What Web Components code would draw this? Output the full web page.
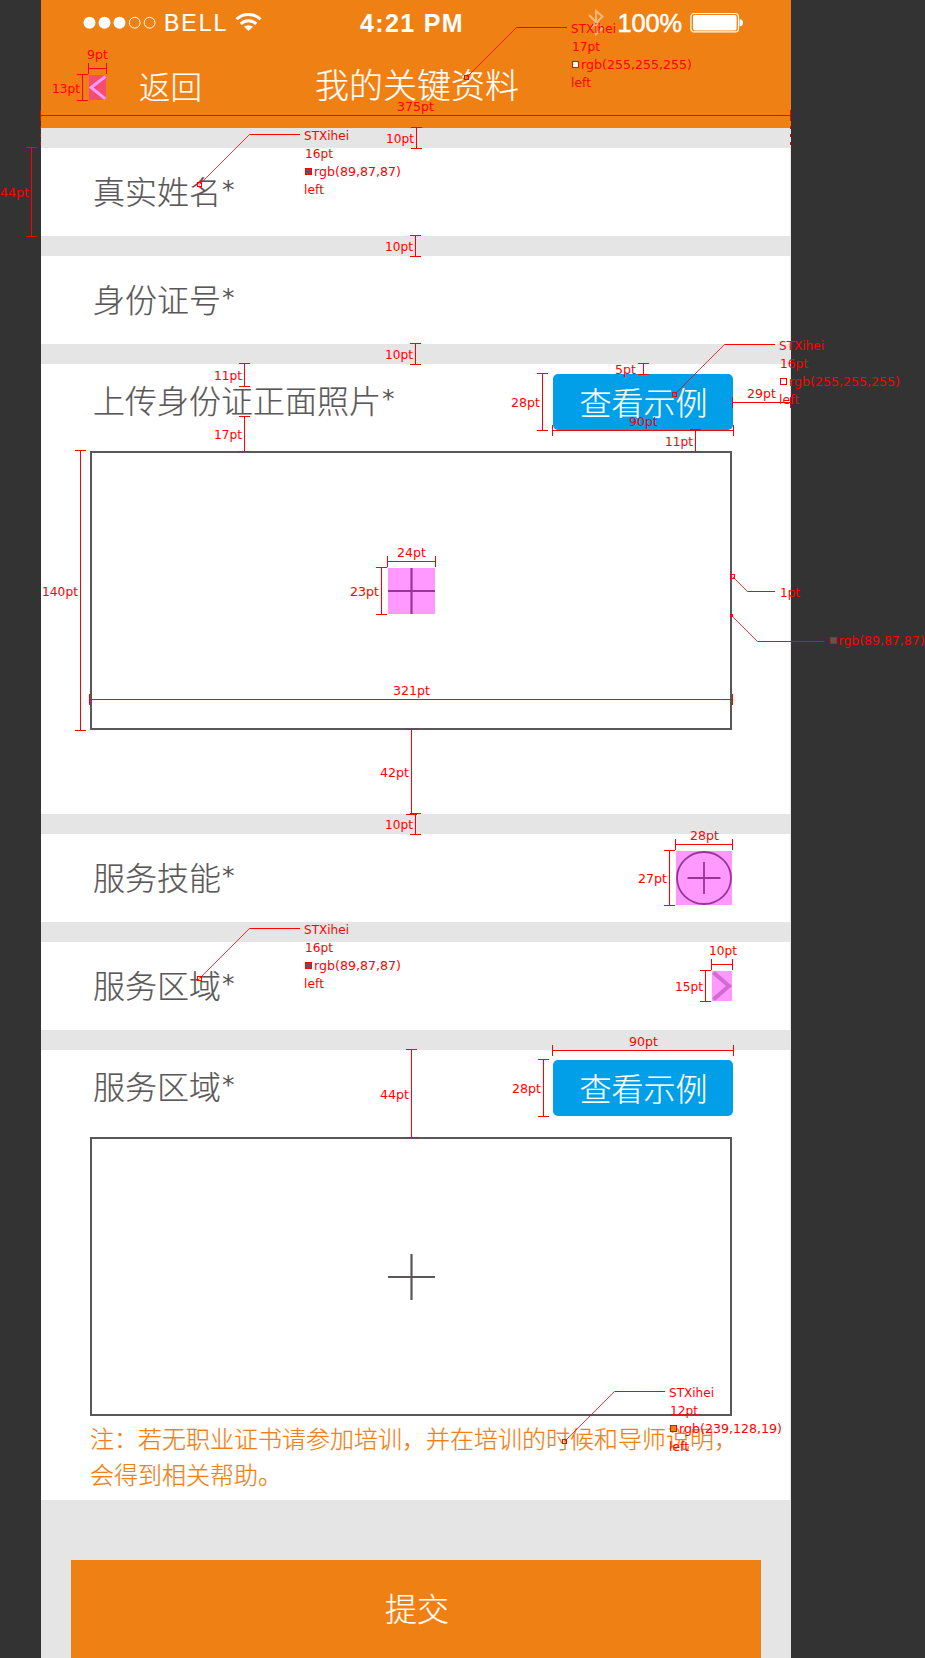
<!DOCTYPE html>
<html lang="zh-CN">
<head>
<meta charset="utf-8">
<title>我的关键资料</title>
<style>
html,body{margin:0;padding:0}
body{width:925px;height:1658px;overflow:hidden;background:#333;position:relative;
font-family:"Noto Sans CJK SC",sans-serif;font-weight:300}
</style>
</head>
<body>
<phone-screen>
  <app-header slot="header" heading="我的关键资料" back="返回"></app-header>
  <form-row label="真实姓名"></form-row>
  <form-row label="身份证号"></form-row>
  <upload-section label="上传身份证正面照片"></upload-section>
  <form-row label="服务技能">
    <svg width="56" height="54" viewBox="0 0 56 54" fill="none" stroke="#595757" stroke-width="1.8"><ellipse cx="28" cy="27" rx="27" ry="26"/><path d="M11.5 27H44.5M28 11V43"/></svg>
  </form-row>
  <form-row label="服务区域">
    <svg width="20" height="30" viewBox="0 0 20 30" fill="none" stroke="#b2b2b2" stroke-width="4"><path d="M1.5 1.5L17 15L1.5 28.5"/></svg>
  </form-row>
  <upload-section label="服务区域">注：若无职业证书请参加培训，并在培训的时候和导师说明，会得到相关帮助。</upload-section>
  <submit-button slot="footer">提交</submit-button>
</phone-screen>
<spec-overlay></spec-overlay>
<script>
const define = (name, html) => customElements.define(name, class extends HTMLElement {
  constructor() {
    super();
    this.attachShadow({mode: 'open'}).innerHTML =
      html.replace(/\{\{(\w+)\}\}/g, (_, k) => this.getAttribute(k) || '');
  }
});

define('phone-screen', `<style>
:host{display:flex;flex-direction:column;width:750px;height:1658px;margin-left:41px;background:#e5e5e5}
main{display:flex;flex-direction:column;gap:20px;padding:20px 1px 0 0}
</style><slot name="header"></slot><main><slot></slot></main><slot name="footer"></slot>`);

define('status-bar', `<style>
:host{display:grid;grid-template-columns:319px 227px 1fr;height:46px;color:#fff;font-family:"Liberation Sans",sans-serif;font-weight:400;line-height:46px}
div{display:flex;align-items:center;white-space:nowrap}
svg{flex:none}
.bell{font-size:23px;letter-spacing:2px;margin-left:8px;width:67px;-webkit-text-stroke:.2px #fff}
.time{font-size:25px;font-weight:700;letter-spacing:1.35px}
.pct{font-size:25.4px;-webkit-text-stroke:.5px #fff;margin-left:13.5px;width:72.5px;letter-spacing:-.1px}
</style>
<div>
<svg style="margin-left:42px" width="73" height="46" fill="#fff"><circle cx="6.5" cy="22.7" r="6"/><circle cx="21.5" cy="22.7" r="6"/><circle cx="36.5" cy="22.7" r="6"/><g fill="none" stroke="#fff"><circle cx="51.7" cy="22.7" r="5.4"/><circle cx="66.6" cy="22.7" r="5.4"/></g></svg>
<span class="bell">BELL</span>
<svg style="margin-left:3px" width="28" height="46" fill="none" stroke="#fff" stroke-width="3"><path d="M2.5 19.2C9 12.8 20 12.8 26.5 19.2M6.8 23.8C11 19.8 18 19.8 22.2 23.8"/><path d="M14.5 31L10 26.8Q14.5 23.8 19 26.8Z" fill="#fff" stroke="none"/></svg>
</div>
<div><span class="time">4:21 PM</span></div>
<div><svg width="17" height="46" fill="none" stroke="#fff" stroke-opacity=".45" stroke-width="2"><path d="M2 15L15.500 28.500L9 34V11L15.500 16.500L2 30"/></svg>
<span class="pct">100%</span>
<svg width="55" height="46" fill="none" stroke="#fff"><rect x=".9" y="13.500" width="47.600" height="18.400" rx="3.500" stroke-width="1.200"/><rect x="3" y="15" width="43.600" height="15.500" rx="2" fill="#fff" stroke="none"/><path d="M49.500 19.200Q53 19.400 53 22.700T49.500 26.200Z" fill="#fff" stroke="none"/></svg></div>`);

define('app-header', `<style>
:host{display:flex;flex-direction:column;height:128px;background:#ef8013;color:#fff}
nav{display:grid;grid-template-columns:274px 1fr;height:82px;-webkit-text-stroke:.2px}
.back{display:flex;align-items:flex-start;font-size:31.5px;line-height:48px;padding:15px 0 0 48px}
.back svg{margin:14px 33px 0 0}
.title{font-size:34px;line-height:48px;padding-top:14px;white-space:nowrap}
</style><status-bar></status-bar>
<nav><div class="back"><svg width="17" height="25" fill="none" stroke="#fff" stroke-width="3"><path d="M16.500 1.500L2 12.500L16.500 24"/></svg><span>{{back}}</span></div>
<div class="title">{{heading}}</div></nav>`);

/* Field caption followed by the required mark. */
define('field-label', `<style>
:host{display:flex;align-items:flex-start;height:48px;font-size:32px;line-height:48px;white-space:nowrap;-webkit-text-stroke:.2px}
i{font:400 25px/26px "DejaVu Sans",sans-serif;margin:11px 0 0 1px;-webkit-text-stroke:0}
</style><span>{{label}}</span><i>*</i>`);

define('form-row', `<style>
:host{display:flex;align-items:center;justify-content:space-between;box-sizing:border-box;height:88px;padding:0 58px 0 52px;background:#fff;color:#595757}
field-label{margin-top:-4px}
::slotted(svg){display:block}
</style><field-label label="{{label}}"></field-label><slot></slot>`);

define('example-button', `<style>
:host{display:flex;align-items:center;justify-content:center;box-sizing:border-box;width:180px;height:56px;padding:0 0 2px 1px;border-radius:5px;background:#009fe8;color:#fff;font-size:32px;line-height:48px;-webkit-text-stroke:.2px}
</style><span><slot></slot></span>`);

define('upload-box', `<style>
:host{display:flex;align-items:center;justify-content:center;box-sizing:border-box;width:642px;height:279px;border:2px solid #595757}
svg{display:block;margin-left:1px}
</style><svg width="47" height="46" fill="#595757"><path d="M0 22H47V24H0Z"/><path d="M22.400 0H24.600V46H22.400Z"/></svg>`);

define('upload-section', `<style>
:host{display:block;box-sizing:border-box;height:450px;padding:10px 57px 0 49px;background:#fff;color:#595757}
header{display:flex;justify-content:space-between;align-items:center;height:56px;padding-left:3px;margin-bottom:21px}
field-label{margin-top:-6px}
p{margin:4px 0 0;width:650px;font-size:24px;line-height:36px;color:#ef8013;-webkit-text-stroke:.2px}
</style><header><field-label label="{{label}}"></field-label><example-button>查看示例</example-button></header>
<upload-box></upload-box><p><slot></slot></p>`);

define('submit-button', `<style>
:host{display:flex;align-items:center;justify-content:center;box-sizing:border-box;width:690px;height:98px;margin:60px 0 0 30px;padding:0 0 4px 2px;background:#ef8013;color:#fff;font-size:32px;line-height:48px;-webkit-text-stroke:.2px}
</style><span><slot></slot></span>`);

/* Measurement layer: dimension lines, highlighted assets and callouts. */
customElements.define('spec-overlay', class extends HTMLElement {
  constructor() {
    super();
    const out = [];
    const rect = (x, y, w, h, extra = '') => out.push(`<rect x="${x}" y="${y}" width="${w}" height="${h}" ${extra}/>`);
    const text = (x, y, s, w) => out.push(`<text x="${x}" y="${y}" textLength="${w}" lengthAdjust="spacingAndGlyphs">${s}</text>`);
    const v = (x, a, b, s, lx, ly, w = 28) => {
      rect(x, a, 1, b - a + 1); rect(x - 5, a, 11, 1); rect(x - 5, b, 11, 1); text(lx, ly, s, w);
    };
    const h = (y, a, b, s, lx, ly, w = 29) => {
      rect(a, y, b - a + 1, 1); rect(a, y - 5, 1, 11); rect(b, y - 5, 1, 11); text(lx, ly, s, w);
    };
    const asset = (x, y, w, hh) => rect(x, y, w, hh, 'fill="#f0f" fill-opacity=".4"');
    const lead = (mx, my, ex, ey, end, r = 2) => {
      out.push(`<path d="M${mx} ${my}L${ex} ${ey}" stroke="red" stroke-width=".8" fill="none"/>`);
      rect(ex, Math.floor(ey), end - ex, 1);
      rect(mx - r, my - r, r * 2, r * 2, 'stroke="red" fill="none"');
    };
    const note = (x, y, size, rgb, w) => {
      text(x, y, 'STXihei', 45); text(x + 1, y + 18, size, 28);
      rect(x + 1.5, y + 28.5, 6, 6, `fill="rgb(${rgb})" stroke="red"`);
      text(x + 10, y + 36, `rgb(${rgb})`, w); text(x, y + 54, 'left', 20);
    };

    asset(89, 75, 17, 25); asset(388, 568, 47, 46); asset(676, 851, 56, 54); asset(712, 971, 20, 30);

    h(68, 88, 106, '9pt', 87, 59, 21);
    v(82, 74, 100, '13pt', 52, 93);
    h(115, 40, 790, '375pt', 397, 111, 37);
    for (const y of [126, 134, 142]) { rect(40, y, 1, 3); rect(790, y, 1, 3); }
    v(416, 127, 148, '10pt', 386, 143);
    v(31, 147, 236, '44pt', 0, 197, 29);
    v(415, 235, 256, '10pt', 385, 251);
    v(415, 343, 364, '10pt', 385, 359);
    v(244, 363, 386, '11pt', 214, 380);
    v(244, 416, 451, '17pt', 214, 439);
    v(80, 450, 730, '140pt', 42, 596, 36);
    v(542, 373, 430, '28pt', 511, 407, 29);
    v(643, 363, 374, '5pt', 615, 374, 21);
    h(430, 552, 733, '90pt', 629, 426);
    v(695, 429, 451, '11pt', 665, 446);
    h(402, 732, 790, '29pt', 747, 398);
    h(561, 387, 435, '24pt', 397, 557);
    v(381, 567, 614, '23pt', 350, 596, 29);
    h(699, 89, 732, '321pt', 393, 695, 37);
    v(411, 729, 814, '42pt', 380, 777, 29);
    v(415, 813, 834, '10pt', 385, 829);
    h(844, 675, 732, '28pt', 690, 840);
    v(669, 850, 905, '27pt', 638, 883, 29);
    h(964, 711, 732, '10pt', 709, 955, 28);
    v(705, 970, 1001, '15pt', 675, 991);
    h(1050, 552, 733, '90pt', 629, 1046);
    v(543, 1059, 1116, '28pt', 512, 1093, 29);
    v(411, 1049, 1137, '44pt', 380, 1099, 29);

    lead(466.5, 77.5, 516.5, 27.5, 567); note(571, 33, '17pt', '255,255,255', 111);
    lead(199.5, 184.5, 249.5, 134.5, 300); note(304, 140, '16pt', '89,87,87', 87);
    lead(674.5, 394.5, 724.5, 344.5, 775); note(779, 350, '16pt', '255,255,255', 111);
    lead(199.5, 978.5, 249.5, 928.5, 300); note(304, 934, '16pt', '89,87,87', 87);
    lead(564.5, 1441.5, 614.5, 1391.5, 665); note(669, 1397, '12pt', '239,128,19', 103);
    lead(732.5, 576.5, 747.5, 591.5, 775); text(780, 597, '1pt', 20);
    lead(731.5, 615.5, 757.5, 641.5, 824, 1);
    rect(830.5, 637.5, 6, 6, 'fill="#595757" stroke="red"'); text(838.5, 645, 'rgb(89,87,87)', 86);

    this.attachShadow({mode: 'open'}).innerHTML = `<style>
:host{display:block;position:absolute;left:0;top:0;width:925px;height:1658px;pointer-events:none}
svg{display:block;overflow:visible}
text{font:400 13px "DejaVu Sans",sans-serif}
</style><svg width="925" height="1658" fill="red">${out.join('')}</svg>`;
  }
});
</script>
</body>
</html>
